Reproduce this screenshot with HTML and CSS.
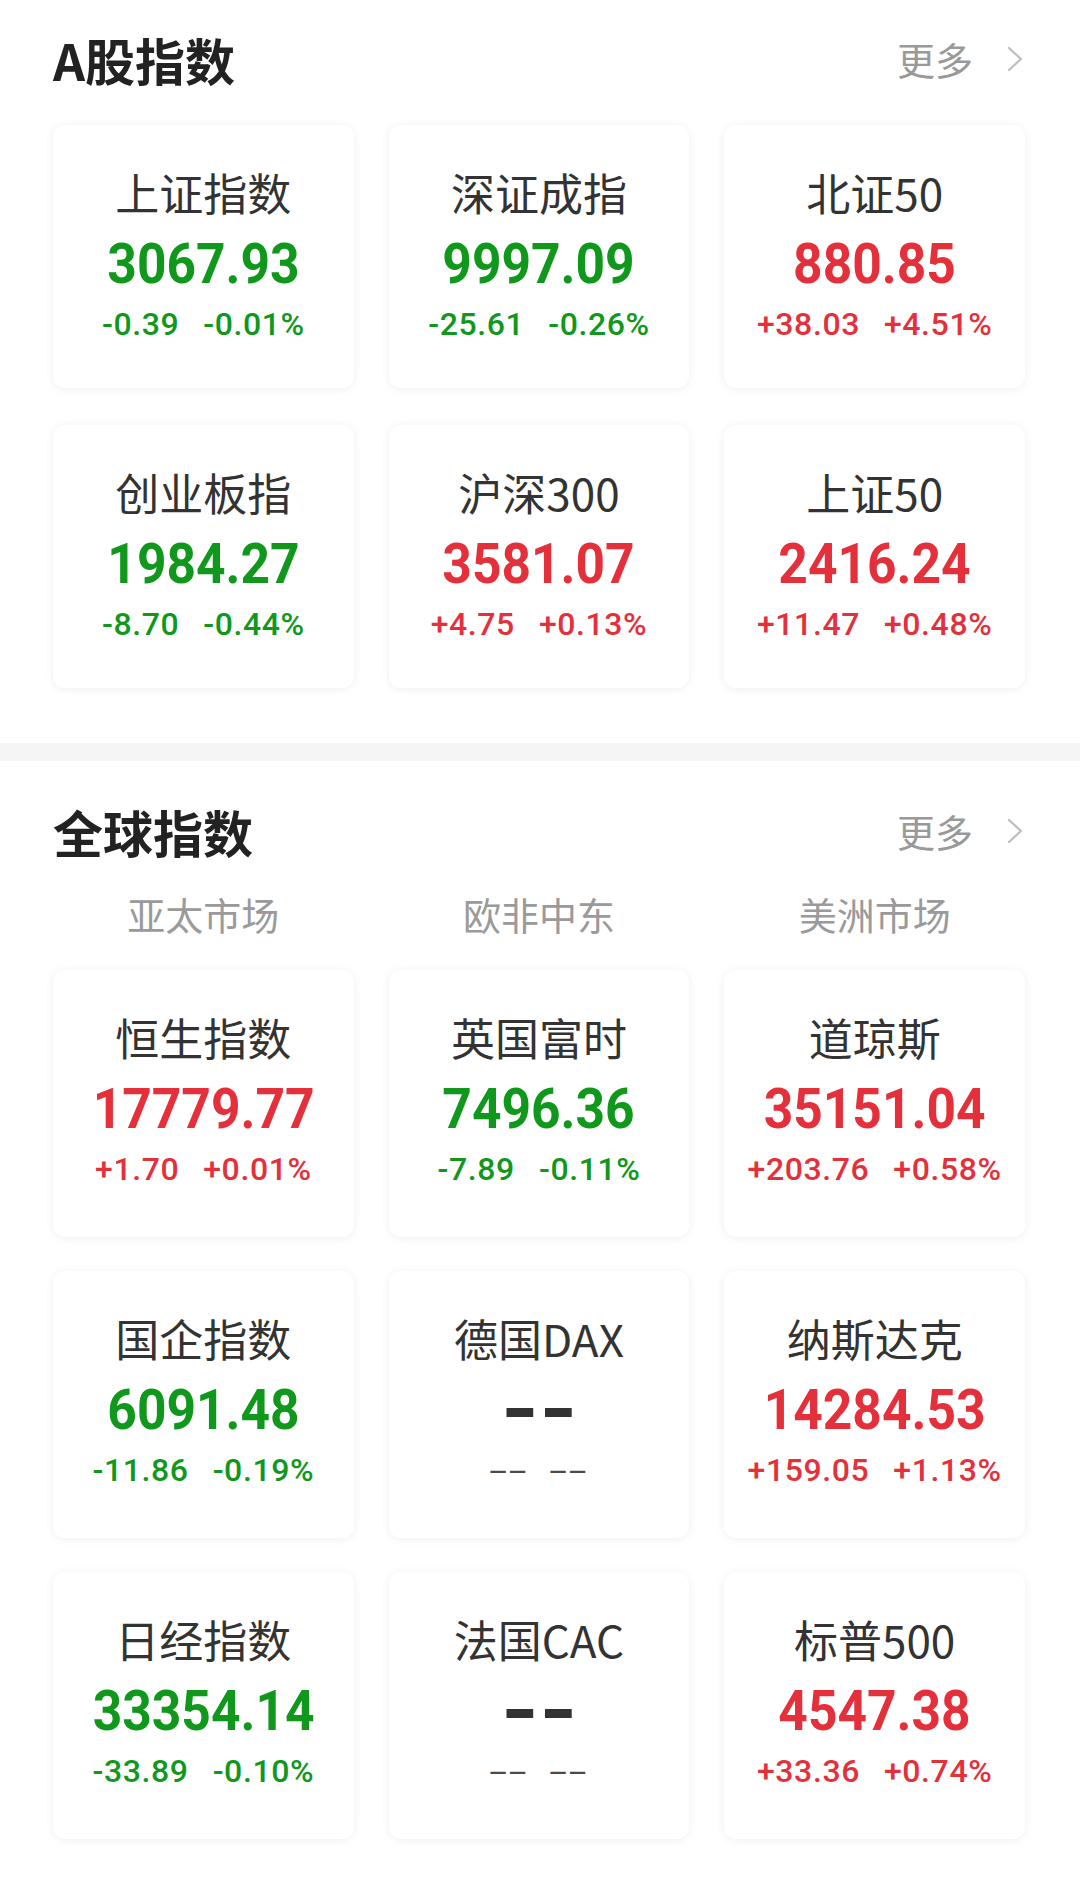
FILE: index.html
```html
<!DOCTYPE html>
<html lang="zh-CN">
<head>
<meta charset="utf-8">
<title>指数</title>
<link rel="stylesheet" href="styles.css">
</head>
<body>
<section class="section section-a">
  <div class="head">
    <h2 class="title">A股指数</h2>
    <div class="more"><span>更多</span><svg class="chev" width="18" height="28" viewBox="0 0 18 28"><polyline points="3,3 15,14 3,25" fill="none" stroke="#bdbdbd" stroke-width="2.2" stroke-linecap="round" stroke-linejoin="round"/></svg></div>
  </div>
  <div class="grid">
    <div class="card">
      <div class="name">上证指数</div>
      <div class="price down"><span>3067.93</span></div>
      <div class="chg down"><span>-0.39</span><span>-0.01%</span></div>
    </div>
    <div class="card">
      <div class="name">深证成指</div>
      <div class="price down"><span>9997.09</span></div>
      <div class="chg down"><span>-25.61</span><span>-0.26%</span></div>
    </div>
    <div class="card">
      <div class="name">北证50</div>
      <div class="price up"><span>880.85</span></div>
      <div class="chg up"><span>+38.03</span><span>+4.51%</span></div>
    </div>
    <div class="card">
      <div class="name">创业板指</div>
      <div class="price down"><span>1984.27</span></div>
      <div class="chg down"><span>-8.70</span><span>-0.44%</span></div>
    </div>
    <div class="card">
      <div class="name">沪深300</div>
      <div class="price up"><span>3581.07</span></div>
      <div class="chg up"><span>+4.75</span><span>+0.13%</span></div>
    </div>
    <div class="card">
      <div class="name">上证50</div>
      <div class="price up"><span>2416.24</span></div>
      <div class="chg up"><span>+11.47</span><span>+0.48%</span></div>
    </div>
  </div>
</section>
<div class="band"></div>
<section class="section section-b">
  <div class="head">
    <h2 class="title">全球指数</h2>
    <div class="more"><span>更多</span><svg class="chev" width="18" height="28" viewBox="0 0 18 28"><polyline points="3,3 15,14 3,25" fill="none" stroke="#bdbdbd" stroke-width="2.2" stroke-linecap="round" stroke-linejoin="round"/></svg></div>
  </div>
  <div class="tabs">
    <div class="tab">亚太市场</div>
    <div class="tab">欧非中东</div>
    <div class="tab">美洲市场</div>
  </div>
  <div class="grid">
    <div class="card">
      <div class="name">恒生指数</div>
      <div class="price up"><span>17779.77</span></div>
      <div class="chg up"><span>+1.70</span><span>+0.01%</span></div>
    </div>
    <div class="card">
      <div class="name">英国富时</div>
      <div class="price down"><span>7496.36</span></div>
      <div class="chg down"><span>-7.89</span><span>-0.11%</span></div>
    </div>
    <div class="card">
      <div class="name">道琼斯</div>
      <div class="price up"><span>35151.04</span></div>
      <div class="chg up"><span>+203.76</span><span>+0.58%</span></div>
    </div>
    <div class="card">
      <div class="name">国企指数</div>
      <div class="price down"><span>6091.48</span></div>
      <div class="chg down"><span>-11.86</span><span>-0.19%</span></div>
    </div>
    <div class="card">
      <div class="name">德国DAX</div>
      <div class="price flat"><span class="dash">--</span></div>
      <div class="chg flat"><span class="dash-s">--</span><span class="dash-s">--</span></div>
    </div>
    <div class="card">
      <div class="name">纳斯达克</div>
      <div class="price up"><span>14284.53</span></div>
      <div class="chg up"><span>+159.05</span><span>+1.13%</span></div>
    </div>
    <div class="card">
      <div class="name">日经指数</div>
      <div class="price down"><span>33354.14</span></div>
      <div class="chg down"><span>-33.89</span><span>-0.10%</span></div>
    </div>
    <div class="card">
      <div class="name">法国CAC</div>
      <div class="price flat"><span class="dash">--</span></div>
      <div class="chg flat"><span class="dash-s">--</span><span class="dash-s">--</span></div>
    </div>
    <div class="card">
      <div class="name">标普500</div>
      <div class="price up"><span>4547.38</span></div>
      <div class="chg up"><span>+33.36</span><span>+0.74%</span></div>
    </div>
  </div>
</section>
</body>
</html>
```
FILE: styles.css
```css
* { box-sizing: border-box; }

body {
  margin: 0;
  width: 1080px;
  background: #ffffff;
  font-family: "Noto Sans CJK SC", "Noto Sans", sans-serif;
  color: #333;
}

.section {
  padding-left: 53px;
  padding-right: 55px;
}

.section-a {
  padding-bottom: 55px;
}

.section-b {
  padding-top: 20px;
  padding-bottom: 40px;
}

.head {
  display: flex;
  align-items: center;
  justify-content: space-between;
  height: 117px;
}

.section-b .head {
  height: 100px;
}

.title {
  margin: 0;
  font-size: 50px;
  font-weight: 700;
  line-height: 1;
  color: #222;
}

.more {
  display: flex;
  align-items: center;
  font-size: 38px;
  line-height: 1;
  color: #999;
}

.chev {
  display: block;
  margin-left: 33px;
  margin-right: 1px;
}

.band {
  height: 18px;
  background: #f5f5f5;
}

.tabs {
  display: grid;
  grid-template-columns: repeat(3, 1fr);
  column-gap: 35px;
  margin-top: 8px;
}

.tab {
  text-align: center;
  font-size: 38px;
  line-height: 50px;
  color: #9a9a9a;
}

.grid {
  display: grid;
  grid-template-columns: repeat(3, 1fr);
  grid-auto-rows: 263px;
  column-gap: 35px;
  row-gap: 37px;
  margin-top: 8px;
}

.section-b .grid {
  margin-top: 31px;
  grid-auto-rows: 267px;
  row-gap: 34px;
}

.card {
  padding-top: 41px;
  background: #fff;
  border-radius: 12px;
  box-shadow: 0 1px 10px rgba(0, 0, 0, 0.07);
  text-align: center;
}

.name {
  font-size: 44px;
  line-height: 52px;
  color: #333;
}

.price {
  margin-top: 16px;
  height: 60px;
  line-height: 60px;
  font-family: Roboto, "Liberation Sans", sans-serif;
  font-weight: 700;
  font-size: 56px;
}

.price span {
  display: inline-block;
  transform: scaleX(0.92);
}

.chg {
  display: flex;
  justify-content: center;
  gap: 24px;
  margin-top: 12px;
  height: 36px;
  line-height: 36px;
  font-family: Roboto, "Liberation Sans", sans-serif;
  font-weight: 500;
  font-size: 32px;
  letter-spacing: 0.6px;
}

.up { color: #e4303b; }
.down { color: #10981c; }

.price.flat { color: #333; }
.chg.flat { color: #4a4a4a; font-weight: 400; gap: 40px; }

.price .dash {
  font-size: 70px;
  font-weight: 900;
  letter-spacing: -2px;
  text-indent: -2px;
  transform: scaleX(1.3);
}

.chg .dash-s {
  display: inline-block;
  letter-spacing: 1px;
  transform: scaleX(2);
}
```
